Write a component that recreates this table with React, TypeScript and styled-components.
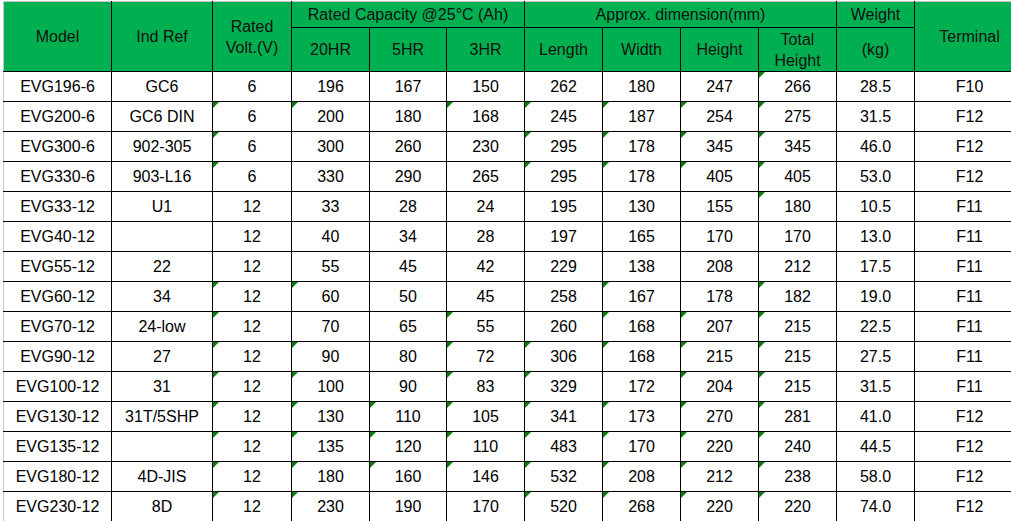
import React from "react";
import styled, { createGlobalStyle, css } from "styled-components";

const GlobalStyle = createGlobalStyle`
  html, body {
    margin: 0;
    padding: 0;
    background: #ffffff;
    overflow: hidden;
  }
  body {
    font-family: "Liberation Sans", Arial, sans-serif;
  }
`;

const Sheet = styled.div`
  width: 1011px;
  height: 521px;
  overflow: hidden;
  padding: 1px 0 0 3px;
  box-sizing: border-box;
  background: #ffffff;
`;

const Table = styled.table`
  border-collapse: collapse;
  table-layout: fixed;
  width: 1021px;
  font-family: "Liberation Sans", Arial, sans-serif;
  font-size: 16px;
  color: #000;
`;

const HeadCell = styled.th<{ $h?: number; $noTop?: boolean; $noLeft?: boolean }>`
  background: #00b050;
  color: #111;
  font-weight: normal;
  text-align: center;
  vertical-align: middle;
  line-height: 21px;
  padding: 0 2px;
  height: ${(p) => (p.$h ? `${p.$h}px` : "auto")};
  border: 1px solid #000;
  ${(p) =>
    p.$noTop &&
    css`
      border-top-color: #c8c8c8;
    `}
  ${(p) =>
    p.$noLeft &&
    css`
      border-left-color: #c8c8c8;
    `}
`;

const Row = styled.tr`
  height: 30px;
`;

const Cell = styled.td<{ $flag?: boolean; $first?: boolean; $greenBottom?: boolean }>`
  position: relative;
  text-align: center;
  vertical-align: middle;
  padding: 0 2px;
  height: 29px;
  line-height: 18px;
  white-space: nowrap;
  border: 1px solid #000;
  ${(p) =>
    p.$first &&
    css`
      border-left-color: #c8c8c8;
    `}
  ${(p) =>
    p.$greenBottom &&
    css`
      border-bottom-color: #3c9a3c;
    `}
  ${(p) =>
    p.$flag &&
    css`
      &::before {
        content: "";
        position: absolute;
        top: 0;
        left: 0;
        width: 0;
        height: 0;
        border-top: 6px solid #0a7d0a;
        border-right: 6px solid transparent;
      }
    `}
`;

type RowData = (string | number)[];

const rows: RowData[] = [
  ["EVG196-6", "GC6", "6", "196", "167", "150", "262", "180", "247", "266", "28.5", "F10"],
  ["EVG200-6", "GC6 DIN", "6", "200", "180", "168", "245", "187", "254", "275", "31.5", "F12"],
  ["EVG300-6", "902-305", "6", "300", "260", "230", "295", "178", "345", "345", "46.0", "F12"],
  ["EVG330-6", "903-L16", "6", "330", "290", "265", "295", "178", "405", "405", "53.0", "F12"],
  ["EVG33-12", "U1", "12", "33", "28", "24", "195", "130", "155", "180", "10.5", "F11"],
  ["EVG40-12", "", "12", "40", "34", "28", "197", "165", "170", "170", "13.0", "F11"],
  ["EVG55-12", "22", "12", "55", "45", "42", "229", "138", "208", "212", "17.5", "F11"],
  ["EVG60-12", "34", "12", "60", "50", "45", "258", "167", "178", "182", "19.0", "F11"],
  ["EVG70-12", "24-low", "12", "70", "65", "55", "260", "168", "207", "215", "22.5", "F11"],
  ["EVG90-12", "27", "12", "90", "80", "72", "306", "168", "215", "215", "27.5", "F11"],
  ["EVG100-12", "31", "12", "100", "90", "83", "329", "172", "204", "215", "31.5", "F11"],
  ["EVG130-12", "31T/5SHP", "12", "130", "110", "105", "341", "173", "270", "281", "41.0", "F12"],
  ["EVG135-12", "", "12", "135", "120", "110", "483", "170", "220", "240", "44.5", "F12"],
  ["EVG180-12", "4D-JIS", "12", "180", "160", "146", "532", "208", "212", "238", "58.0", "F12"],
  ["EVG230-12", "8D", "12", "230", "190", "170", "520", "268", "220", "220", "74.0", "F12"],
];

const flags: number[][] = [
  [9],
  [2, 3, 5, 6, 7, 8, 9],
  [2, 6, 7, 8, 9],
  [2, 6, 7, 8, 9],
  [9],
  [],
  [],
  [2, 3, 7, 9],
  [2, 5, 7, 8, 9],
  [2, 3, 5, 6, 7, 8, 9],
  [2, 3, 5, 6, 8, 9],
  [2, 3, 4, 5, 6, 7, 8, 9],
  [2, 3, 4, 5, 6, 7, 8, 9],
  [2, 3, 4, 5, 6, 7, 8, 9],
  [2, 3, 6, 7, 8, 9],
];

const colWidths = [108, 101, 79, 78, 77, 78, 78, 78, 78, 78, 78, 110];

export default function App() {
  return (
    <>
      <GlobalStyle />
      <Sheet>
        <Table>
          <colgroup>
            {colWidths.map((w, i) => (
              <col key={i} style={{ width: `${w}px` }} />
            ))}
          </colgroup>
          <thead>
            <tr>
              <HeadCell rowSpan={2} $noTop $noLeft>
                Model
              </HeadCell>
              <HeadCell rowSpan={2} $noTop>
                Ind Ref
              </HeadCell>
              <HeadCell rowSpan={2} $noTop>
                Rated
                <br />
                Volt.(V)
              </HeadCell>
              <HeadCell colSpan={3} $h={25} $noTop>
                Rated Capacity @25°C (Ah)
              </HeadCell>
              <HeadCell colSpan={4} $noTop>
                Approx. dimension(mm)
              </HeadCell>
              <HeadCell $noTop>Weight</HeadCell>
              <HeadCell rowSpan={2} $noTop>
                Terminal
              </HeadCell>
            </tr>
            <tr>
              <HeadCell $h={43}>20HR</HeadCell>
              <HeadCell>5HR</HeadCell>
              <HeadCell>3HR</HeadCell>
              <HeadCell>Length</HeadCell>
              <HeadCell>Width</HeadCell>
              <HeadCell>Height</HeadCell>
              <HeadCell>
                Total
                <br />
                Height
              </HeadCell>
              <HeadCell>(kg)</HeadCell>
            </tr>
          </thead>
          <tbody>
            {rows.map((r, ri) => (
              <Row key={ri}>
                {r.map((v, ci) => (
                  <Cell
                    key={ci}
                    $first={ci === 0}
                    $flag={flags[ri].includes(ci)}
                    $greenBottom={ri === rows.length - 1 && ci >= 1 && ci <= 5}
                  >
                    {v}
                  </Cell>
                ))}
              </Row>
            ))}
          </tbody>
        </Table>
      </Sheet>
    </>
  );
}
